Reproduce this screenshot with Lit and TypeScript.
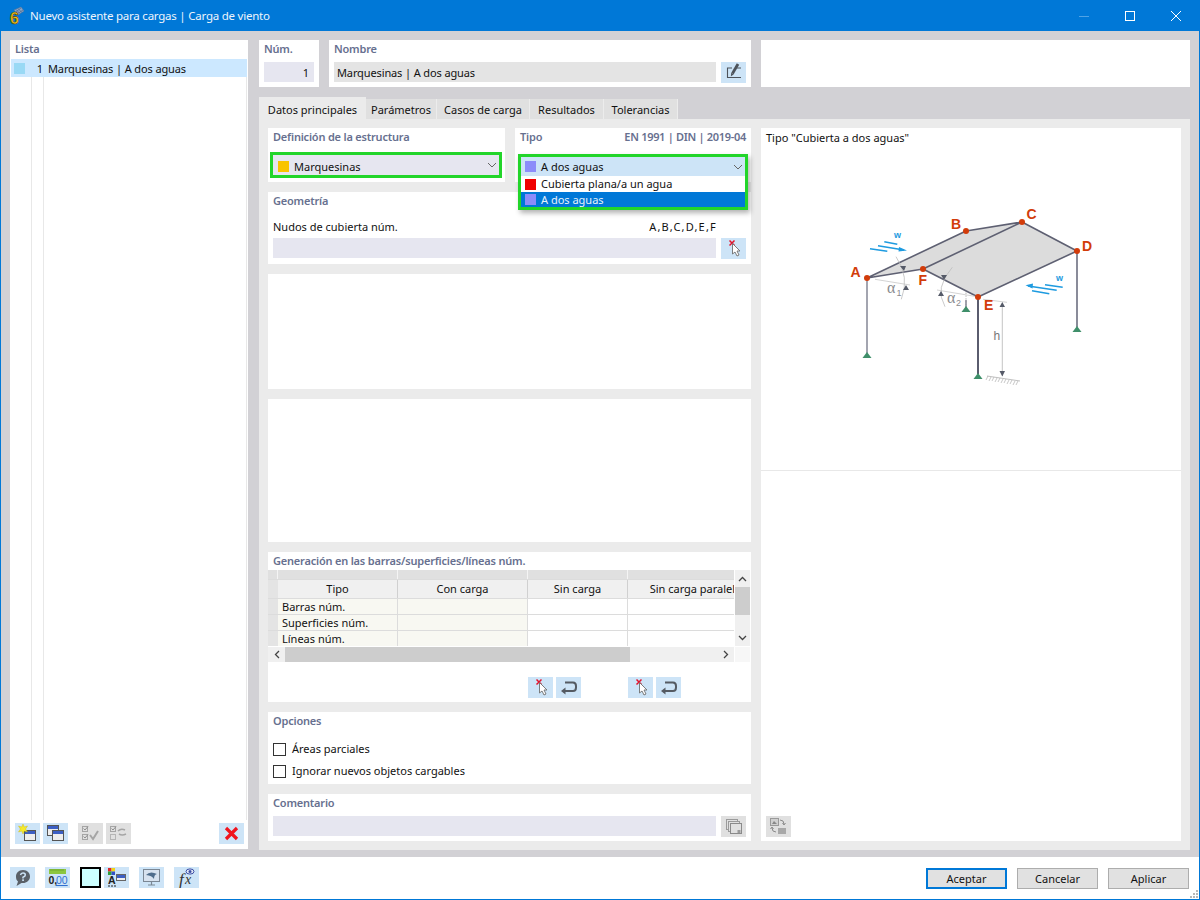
import { LitElement, html, css, svg } from "lit";
import { customElement } from "lit/decorators.js";

const ic = (body: unknown, w = 25, h = 21) =>
  html`<svg width=${w} height=${h} viewBox="0 0 25 21" xmlns="http://www.w3.org/2000/svg">${body}</svg>`;

const cursorX = svg`
  <path d="M8.5 2.5 L13.5 7.5 M13.5 2.5 L8.5 7.5" stroke="#e2142d" stroke-width="1.5" fill="none"/>
  <path d="M11.5 5.5 L11.5 16 L14 14 L16 18 L18 17 L16 13 L19 13 Z" fill="#fff" stroke="#6e6e6e" stroke-width="0.9"/>`;
const ret = svg`
  <path d="M9 5.5 H17 Q20 5.5 20 9 V10.5 Q20 14 17 14 H9" stroke="#555b63" stroke-width="2" fill="none"/>
  <path d="M9.5 10.5 L5 14 L9.5 17.5 Z" fill="#555b63"/>`;
const edit = svg`
  <path d="M11 6 H6.5 V15.5 H20 M16 6 H20" stroke="#4d535b" stroke-width="1.1" fill="none"/>
  <path d="M17 2 L11.5 11.5" stroke="#4d535b" stroke-width="2.8" fill="none"/>
  <path d="M10.2 10.8 L12.8 12.2 L9.8 14.5 Z" fill="#4d535b"/>`;
const win = (x: number, y: number, w: number, h: number, bar = "#3c5fc4", stroke = "#555", fill = "#eee") => svg`
  <rect x=${x + 0.5} y=${y + 0.5} width=${w} height=${h} fill=${fill} stroke=${stroke}/>
  <rect x=${x + 1} y=${y + 1} width=${w - 1} height="3" fill=${bar}/>`;
const newWin = svg`
  ${win(9, 7, 11, 10)}
  <path d="M8 1 L9.3 4 L12.5 3 L10.6 6 L12.5 9 L9.3 8 L8 11 L6.7 8 L3.5 9 L5.4 6 L3.5 3 L6.7 4 Z" fill="#f5e92d" stroke="#c9b400" stroke-width="0.4"/>`;
const copyWin = svg`${win(4, 2, 11, 10)}${win(9, 7, 11, 10)}`;
const checks = svg`
  <rect x="4.5" y="3.5" width="5" height="5" fill="none" stroke="#a5a5a5"/>
  <rect x="4.5" y="11.5" width="5" height="5" fill="none" stroke="#a5a5a5"/>
  <path d="M5.5 5.5 L7 7 L10 3.5 M5.5 13.5 L7 15 L10 11.5" stroke="#8e8e8e" fill="none"/>
  <path d="M12 12 L15 16 L20 8" stroke="#a5a5a5" stroke-width="2" fill="none"/>`;
const checksSwap = svg`
  <rect x="4.5" y="3.5" width="5" height="5" fill="none" stroke="#a5a5a5"/>
  <rect x="4.5" y="11.5" width="5" height="5" fill="none" stroke="#b5b5b5"/>
  <path d="M5.5 5.5 L7 7 L10 3.5" stroke="#8e8e8e" fill="none"/>
  <path d="M12 8 Q15 5 19 7 M20 11 Q16 13 13 11" stroke="#a5a5a5" stroke-width="1.6" fill="none"/>`;
const redX = svg`<path d="M7 5 L18 16 M18 5 L7 16" stroke="#f0141e" stroke-width="3.2" fill="none"/>`;
const help = svg`
  <path d="M13 3 C17.5 3 20 6 20 9.5 C20 13.5 16.5 16 13 16 L11.5 16 L6.5 19 L8 14.5 C6.5 13.5 6 11.5 6 9.5 C6 6 8.5 3 13 3 Z" fill="#5a6068"/>
  <path d="M10.5 8 Q11 6 13 6 Q15.3 6 15.3 8 Q15.3 9.5 13 10.2 V11.5" stroke="#cde4f7" stroke-width="1.5" fill="none"/>
  <rect x="12.2" y="12.3" width="1.7" height="1.7" fill="#cde4f7"/>`;
const ruler = svg`
  <rect x="4" y="2" width="17" height="5" fill="#8cc63f"/>
  <path d="M6 2v2M8 2v2M10 2v2M12 2v2M14 2v2M16 2v2M18 2v2" stroke="#5d9322" stroke-width="0.6"/>
  <text x="3.5" y="17" font-size="10.5" font-weight="700" font-family="Liberation Sans, sans-serif" fill="#222">0,</text>
  <text x="11" y="17" font-size="10.5" font-family="Liberation Sans, sans-serif" fill="#2f6fd0" text-decoration="underline">00</text>`;
const colorFont = svg`
  <rect x="4" y="1" width="3.5" height="3.5" fill="#e0262a"/><rect x="7.5" y="1" width="3.5" height="3.5" fill="#f2d416"/>
  <rect x="4" y="4.5" width="3.5" height="3.5" fill="#2f9e3a"/><rect x="7.5" y="4.5" width="3.5" height="3.5" fill="#3352c8"/>
  <text x="4" y="17" font-size="10.5" font-weight="700" font-family="Liberation Sans, sans-serif" fill="#222">A</text>
  <path d="M4 19h2M7 19h2M10 19h2" stroke="#222"/>
  ${win(12, 7, 9, 6, "#3c5fc4", "#666", "#eee")}`;
const monitor = svg`
  <rect x="4.5" y="2.5" width="16" height="12" fill="#d7e2ef" stroke="#7b8794"/>
  <path d="M7 8 Q11 3.5 18 7 Q15 7.5 15 12 Q13 8.5 7 8 Z" fill="#4f6d8c"/>
  <path d="M12.5 15v2.5M9 18h7" stroke="#7b8794" stroke-width="1.2"/>`;
const fx = svg`
  <text x="5" y="18" font-size="17" font-style="italic" font-family="Liberation Serif, serif" fill="#333">f</text>
  <text x="11" y="17" font-size="14" font-style="italic" font-family="Liberation Serif, serif" fill="#333">x</text>
  <ellipse cx="16" cy="4.5" rx="4" ry="2.6" fill="#dfe6f6" stroke="#3d4fa5"/>
  <circle cx="16" cy="4.5" r="1.5" fill="#3d4fa5"/>`;
const copyGray = svg`
  <rect x="5.5" y="3.5" width="11" height="10" fill="none" stroke="#9a9a9a"/>
  <rect x="7.5" y="5.5" width="11" height="10" fill="#e0e0e0" stroke="#9a9a9a"/>
  <rect x="9.5" y="7.5" width="11" height="10" fill="#e0e0e0" stroke="#8a8a8a"/>
  <rect x="16.5" y="14" width="3" height="3" fill="#9a9a9a"/>`;
const swapGray = svg`
  <rect x="4.5" y="2.5" width="8" height="7" fill="#d0d0d0" stroke="#9a9a9a"/>
  <path d="M6 8 L8 5 L11 8 Z" fill="#888"/>
  <rect x="12" y="12" width="8" height="6" fill="#a8a8a8"/>
  <path d="M14 4 Q18 4 18 8 M16.5 7 L18 9 L19.5 7 M10 16 Q6 16 6 12 M4.5 13 L6 11 L7.5 13" stroke="#8a8a8a" fill="none"/>`;

const roofDiagram = svg`
<svg class="diagram" width="420" height="342" viewBox="761 128 420 342" xmlns="http://www.w3.org/2000/svg">
  <defs>
    <path id="sup" d="M-4.5 0 L0 -6 L4.5 0 Z" fill="#3f8f6a"/>
  </defs>
  <path d="M966 231 V307" stroke="#b5b5b5" stroke-width="1" stroke-dasharray="1.4 1.4"/>
  <path d="M966 300 V308" stroke="#8c8e9a" stroke-width="1.6"/>
  <path d="M867 278 L966 231 L1022 222 L1077 251 L978 297 L923 269 Z" fill="#dcdcdc"/>
  <path d="M867 278 V353" stroke="#a3a5b0" stroke-width="2"/>
  <path d="M978 297 V374" stroke="#5a5c6e" stroke-width="2"/>
  <path d="M1077 251 V327" stroke="#7d7f8e" stroke-width="1.8"/>
  <path d="M867 278 L966 231 L1022 222 L923 269 Z M923 269 L978 297 L1077 251 L1022 222" fill="none" stroke="#5e6072" stroke-width="1.6" stroke-linejoin="round"/>
  <use href="#sup" x="867" y="358"/><use href="#sup" x="978" y="379"/><use href="#sup" x="1077" y="332"/><use href="#sup" x="966" y="312"/>
  <path d="M987 376 L1020 381" stroke="#b0b0b0" stroke-width="0.8"/>
  <path d="M988 376l-2 4M991 377l-2 4M994 377l-2 4M997 378l-2 4M1000 378l-2 4M1003 379l-2 4M1006 379l-2 4M1009 380l-2 4M1012 380l-2 4M1015 381l-2 4M1018 381l-2 4" stroke="#b0b0b0" stroke-width="0.7"/>
  <path d="M875 279.3 L910 285 M937 290 L977 296.7 M983 299.3 L1007 302.3" stroke="#c8c8c8" stroke-width="0.8"/>
  <path d="M896 256.7 Q910 277 901.3 299.3 M952.3 267.3 Q934 288 945 306.7" stroke="#bdbdbd" stroke-width="0.8" fill="none"/>
  <path d="M1002.3 303 V376" stroke="#bdbdbd" stroke-width="0.9"/>
  <path d="M999.5 307 L1002.3 302 L1005 307 Z M999.5 371 L1002.3 376.5 L1005 371 Z" fill="#555a68"/>
  <path d="M903 290 L906 285 L909 290 Z M938 296 L941 291 L944 296 Z M900 266 L906 266 L904 271 Z M941 275 L947 275 L944 280 Z" fill="#555a68"/>
  <g stroke="#1e9be0" fill="none" stroke-width="1.5">
    <path d="M884.3 241.7 L897.3 244.3 M878 245.7 L904 250 M870 248.7 L887.3 251.3"/>
    <path d="M1045 284.7 L1062.7 287.3 M1028 286 L1056.7 290.3 M1032 290.7 L1049.3 293.7"/>
  </g>
  <path d="M899 247 L907 250.6 L898.5 251.5 Z M1033 283.5 L1025.5 285.3 L1032.5 288.5 Z" fill="#1e9be0"/>
  <g font-family="Liberation Sans, sans-serif" font-size="9" font-weight="700" fill="#1e9be0">
    <text x="894" y="238">w</text><text x="1056" y="281">w</text>
  </g>
  <g font-family="Liberation Sans, sans-serif" font-size="14" font-weight="700" fill="#d23c0a">
    <text x="850.5" y="277">A</text><text x="951" y="229">B</text><text x="1026.5" y="219">C</text>
    <text x="1082" y="251">D</text><text x="984" y="310">E</text><text x="918.5" y="285">F</text>
  </g>
  <g font-family="Liberation Serif, serif" font-size="16" fill="#8a8a8e">
    <text x="887" y="293">α</text><text x="947" y="303">α</text>
  </g>
  <g font-family="Liberation Sans, sans-serif" font-size="9" fill="#8a8a8e">
    <text x="896.5" y="296">1</text><text x="956" y="306">2</text>
  </g>
  <text x="993.5" y="340" font-family="Liberation Sans, sans-serif" font-size="12" fill="#777">h</text>
  <g fill="#d23c0a">
    <circle cx="867" cy="278" r="3"/><circle cx="966" cy="231" r="3"/><circle cx="1022" cy="222" r="3"/>
    <circle cx="1077" cy="251" r="3"/><circle cx="978" cy="297" r="3"/><circle cx="923" cy="269" r="3"/>
  </g>
</svg>`;

@customElement("app-root")
export class AppRoot extends LitElement {
  static styles = css`
    :host { display: block; width: 1200px; height: 900px; font-family: "Noto Sans", sans-serif; font-size: 11px; color: #111; }
    * { box-sizing: border-box; }
    svg { display: block; }
    .win { width: 1200px; height: 900px; display: flex; flex-direction: column; border: 1px solid #0078d7; border-top: 0; background: #fff; }
    .title { height: 31px; flex: none; background: #0078d7; color: #eef5fc; display: flex; align-items: center; padding-left: 7px; gap: 5px; font-size: 11.5px; letter-spacing: -0.23px; margin: 0 -1px; }
    .controls { margin-left: auto; margin-right: 1px; display: flex; align-items: center; }
    .ctl { width: 46px; height: 31px; display: flex; align-items: center; justify-content: center; }
    .body { flex: 1; min-height: 0; background: #d2d1d5; padding: 9px 9px 7px; display: grid; grid-template-columns: 238px 1fr; column-gap: 11px; }
    .card { background: #fff; }
    .hd { font-weight: 600; color: #67708f; line-height: 16px; letter-spacing: -0.2px; }
    .pipe { letter-spacing: -0.12px; }
    .list { display: flex; flex-direction: column; position: relative; height: 809px; }
    .list .hd { padding-left: 5px; height: 19px; flex: none; line-height: 17px; }
    .lrow { height: 18px; flex: none; margin: 0 1px; background: #cce8ff; display: flex; align-items: center; }
    .swatch { width: 11px; height: 11px; flex: none; }
    .lrow .swatch { background: #99d9f5; margin-left: 3px; }
    .lnum { width: 18px; text-align: right; }
    .ltxt { margin-left: 5px; }
    .ltree { flex: 1; margin: 0 0 0 1px; display: flex; }
    .ltree i { display: block; width: 12px; border-right: 1px solid #e8e8e8; height: 100%; }
    .ltree i:first-child { width: 21px; }
    .ltree b { display: block; margin-left: auto; width: 1px; margin-right: 1px; background: #e8e8e8; }
    .lbar { height: 29px; flex: none; display: flex; gap: 3px; padding: 3px 0 5px 5px; align-items: flex-start; }
    .btn { width: 25px; height: 21px; background: #cde4f7; flex: none; }
    .btn.off { background: #e0e0e0; }
    .sp { margin-left: 7px; }
    .del { margin-left: auto; margin-right: 4px; }
    .main { display: flex; flex-direction: column; min-width: 0; }
    .top { display: grid; grid-template-columns: 60px 422px 429px; column-gap: 10px; height: 47px; flex: none; }
    .top .card { padding: 1px 5px 0; }
    .numv { margin-top: 5px; height: 20px; background: #e6e6f0; text-align: right; padding-right: 5px; line-height: 22px; }
    .namerow { display: flex; gap: 5px; margin-top: 5px; }
    .namev { flex: 1; height: 20px; background: #e4e4e4; padding-left: 3px; line-height: 22px; }
    .tabs { display: flex; margin-top: 10px; height: 22px; flex: none; align-items: flex-end; }
    .tab { height: 20px; background: #e0e0e0; border-right: 1px solid #ececec; line-height: 22px; text-align: center; }
    .tab.on { height: 22px; background: #ebebeb; line-height: 25px; border: 0; }
    .panel { flex: 1; min-height: 0; background: #ebebeb; padding: 9px 9px 8px; display: grid; grid-template-columns: 483px 420px; column-gap: 10px; }
    .col { display: flex; flex-direction: column; gap: 10px; min-height: 0; }
    .split { display: grid; grid-template-columns: 237px 236px; column-gap: 10px; height: 54px; flex: none; }
    .split .card { padding: 1px 5px 0; position: relative; }
    .hdrow { display: flex; justify-content: space-between; }
    .std { letter-spacing: -0.3px; }
    .combo { position: absolute; display: flex; align-items: center; }
    .c1 { left: 2px; top: 24px; width: 232px; height: 26px; border: 3px solid #22d52a; background: #e6e6f0; padding: 3px 0 0 5px; gap: 5px; }
    .c1 .chev { transform: translateY(-2px); }
    .chev { margin-left: auto; margin-right: 2px; }
    .dd { position: absolute; left: 3px; top: 26px; width: 230px; height: 56px; border: 3px solid #22d52a; background: #fff; z-index: 3; box-shadow: 2px 3px 5px rgba(0,0,0,.3); display: flex; flex-direction: column; }
    .dd > div { display: flex; align-items: center; gap: 5px; padding-left: 4px; }
    .dd .s { height: 19px; background: #cde4f7; padding-left: 4px; }
    .dd .o1 { height: 16px; }
    .dd .o1 span { margin-top: -2px; }
    .dd .o2 { height: 15px; background: #0078d7; color: #e8f2fb; }
    .geo { height: 72px; flex: none; padding: 1px 5px 0; }
    .geo .lab { margin-top: 10px; height: 16px; line-height: 16px; display: flex; justify-content: space-between; padding-right: 29px; }
    .nodes { letter-spacing: 1.2px; }
    .inrow { display: flex; gap: 5px; margin-top: 3px; }
    .in { flex: 1; height: 20px; background: #e6e6f0; }
    .blank1 { height: 115px; flex: none; }
    .blank2 { height: 143px; flex: none; }
    .gen { height: 150px; flex: none; padding-top: 1px; }
    .gen .hd { padding-left: 5px; height: 17px; }
    .tbl { display: grid; grid-template-columns: 466px 1px 15px; height: 92px; }
    .grid { display: grid; grid-template-columns: 10px 120px 130px 100px 136px; grid-template-rows: 9px 1px 18px 1px 15px 1px 15px 1px 15px; overflow: hidden; height: 76px; width: 466px; background: #fff; }
    .g { border-right: 1px solid #dcdcdc; white-space: nowrap; overflow: hidden; }
    .gh { background: #e0e0e0; border-right-color: #f4f4f4; }
    .gt { background: #f0f0f0; text-align: center; line-height: 18px; color: #111; border-right-color: #d0d0d0; }
    .gr { background: #e4e4e4; border-right: 0; }
    .ga { background: #f8f8f2; padding-left: 4px; line-height: 15px; }
    .gb { background: #f8f8f2; }
    .gw { background: #fff; }
    .line { grid-column: 1 / -1; background: #dcdcdc; }
    .vs { grid-column: 3; grid-row: 1; height: 76px; background: #f0f0f0; display: flex; flex-direction: column; }
    .ar { height: 17px; display: flex; align-items: center; justify-content: center; flex: none; }
    .thumbv { height: 28px; background: #cdcdcd; flex: none; }
    .hs { grid-column: 1; grid-row: 2; margin-top: 1px; height: 15px; background: #f0f0f0; display: flex; align-items: center; }
    .corner { grid-column: 3; grid-row: 2; margin-top: 1px; height: 15px; background: #f7f7f7; }
    .thumbh { width: 345px; height: 15px; background: #cdcdcd; }
    .hs .ar { width: 17px; height: 15px; }
    .hs .ar.r { margin-left: auto; }
    .gbtns { display: flex; padding: 15px 0 0 260px; gap: 3px; }
    .opt { height: 72px; flex: none; padding: 1px 5px 0; }
    .ck { display: flex; align-items: flex-start; gap: 6px; height: 13px; line-height: 13px; }
    .ck span { margin-top: -1px; }
    .box { width: 13px; height: 13px; border: 1px solid #333; background: #fff; }
    .opt .ck:nth-of-type(2) { margin-top: 14px; }
    .opt .ck:nth-of-type(3) { margin-top: 9px; }
    .com { height: 47px; flex: none; padding: 1px 5px 0; }
    .com .inrow { margin-top: 5px; }
    .right { display: flex; flex-direction: column; height: 713px; }
    .rtop { height: 343px; flex: none; position: relative; border-bottom: 1px solid #e8e8e8; padding: 2px 5px; }
    .rtop .t { line-height: 16px; position: relative; z-index: 1; }
    .diagram { position: absolute; left: 0; top: 0; }
    .rbot { flex: 1; display: flex; align-items: flex-end; padding: 0 5px 4px; }
    .foot { height: 42px; flex: none; display: flex; align-items: flex-start; padding: 10px 9px 0; position: relative; }
    .foot .btn { margin-right: 10px; }
    .foot .colorbox { width: 21px; height: 21px; border: 2px solid #000; background: #ccffff; margin-right: 3px; flex: none; }
    .acts { margin-left: auto; display: flex; gap: 10px; padding: 1px 1px 0 0; }
    .act { width: 81px; height: 21px; background: #e1e1e1; border: 1px solid #adadad; text-align: center; line-height: 19px; }
    .act.pri { border: 2px solid #0078d7; line-height: 17px; }
    .grip { position: absolute; right: 0; bottom: 0; }
  `;

  render() {
    const chev = html`<svg class="chev" width="10" height="6" viewBox="0 0 10 6"><path d="M1 1 L5 5 L9 1" stroke="#666" fill="none"/></svg>`;
    const tabs: [string, number][] = [["Parámetros", 71], ["Casos de carga", 93], ["Resultados", 74], ["Tolerancias", 74]];
    return html`
      <div class="win">
        <div class="title">
          <svg width="18" height="20" viewBox="0 0 18 20">
            <path d="M7 4 L14 1 L17 5 L11 9 Z" fill="#8aa5c8" stroke="#5e7590" stroke-width="0.5"/>
            <path d="M9 3.5l4 4M11 2.5l4 4M8 6.5l6-4.5M10 8l6-4" stroke="#3f5674" stroke-width="0.5"/>
            <text x="3" y="18" font-family="Liberation Sans, sans-serif" font-weight="700" font-size="16" fill="#f7c41a" stroke="#5c4a08" stroke-width="0.7">6</text>
          </svg>
          <span>Nuevo asistente para cargas | Carga de viento</span>
          <div class="controls">
            <div class="ctl"><svg width="10" height="10" viewBox="0 0 10 10"><path d="M0 5.5H10" stroke="#4fa3e6"/></svg></div>
            <div class="ctl"><svg width="10" height="10" viewBox="0 0 10 10"><rect x=".5" y=".5" width="9" height="9" fill="none" stroke="#fff"/></svg></div>
            <div class="ctl"><svg width="10" height="10" viewBox="0 0 10 10"><path d="M0 0L10 10M10 0L0 10" stroke="#fff"/></svg></div>
          </div>
        </div>

        <div class="body">
          <div class="card list">
            <div class="hd">Lista</div>
            <div class="lrow"><div class="swatch"></div><div class="lnum">1</div><div class="ltxt pipe">Marquesinas | A dos aguas</div></div>
            <div class="ltree"><i></i><i></i><b></b></div>
            <div class="lbar">
              <div class="btn">${ic(newWin)}</div>
              <div class="btn">${ic(copyWin)}</div>
              <div class="btn off sp">${ic(checks)}</div>
              <div class="btn off">${ic(checksSwap)}</div>
              <div class="btn del">${ic(redX)}</div>
            </div>
          </div>

          <div class="main">
            <div class="top">
              <div class="card"><div class="hd">Núm.</div><div class="numv">1</div></div>
              <div class="card"><div class="hd">Nombre</div>
                <div class="namerow"><div class="namev pipe">Marquesinas | A dos aguas</div><div class="btn">${ic(edit)}</div></div>
              </div>
              <div class="card"></div>
            </div>
            <div class="tabs">
              <div class="tab on" style="width:107px">Datos principales</div>
              ${tabs.map(([t, w]) => html`<div class="tab" style="width:${w}px">${t}</div>`)}
            </div>
            <div class="panel">
              <div class="col">
                <div class="split">
                  <div class="card">
                    <div class="hd">Definición de la estructura</div>
                    <div class="combo c1"><div class="swatch" style="background:#f9c400"></div><span>Marquesinas</span>${chev}</div>
                  </div>
                  <div class="card">
                    <div class="hdrow hd"><span>Tipo</span><span class="std">EN 1991 | DIN | 2019-04</span></div>
                    <div class="dd">
                      <div class="s"><div class="swatch" style="background:#8c8cfa"></div><span>A dos aguas</span>${chev}</div>
                      <div class="o1"><div class="swatch" style="background:#f00000"></div><span>Cubierta plana/a un agua</span></div>
                      <div class="o2"><div class="swatch" style="background:#8c8cfa"></div><span>A dos aguas</span></div>
                    </div>
                  </div>
                </div>
                <div class="card geo">
                  <div class="hd">Geometría</div>
                  <div class="lab"><span>Nudos de cubierta núm.</span><span class="nodes">A,B,C,D,E,F</span></div>
                  <div class="inrow"><div class="in"></div><div class="btn">${ic(cursorX)}</div></div>
                </div>
                <div class="card blank1"></div>
                <div class="card blank2"></div>
                <div class="card gen">
                  <div class="hd">Generación en las barras/superficies/líneas núm.</div>
                  <div class="tbl">
                    <div class="grid">
                      <div class="g gh"></div><div class="g gh"></div><div class="g gh"></div><div class="g gh"></div><div class="g gh"></div>
                      <div class="line"></div>
                      <div class="g gr"></div><div class="g gt">Tipo</div><div class="g gt">Con carga</div><div class="g gt">Sin carga</div><div class="g gt">Sin carga paralela</div>
                      <div class="line"></div>
                      <div class="g gr"></div><div class="g ga">Barras núm.</div><div class="g gb"></div><div class="g gw"></div><div class="g gw"></div>
                      <div class="line"></div>
                      <div class="g gr"></div><div class="g ga">Superficies núm.</div><div class="g gb"></div><div class="g gw"></div><div class="g gw"></div>
                      <div class="line"></div>
                      <div class="g gr"></div><div class="g ga">Líneas núm.</div><div class="g gb"></div><div class="g gw"></div><div class="g gw"></div>
                    </div>
                    <div></div>
                    <div class="vs">
                      <div class="ar"><svg width="9" height="6" viewBox="0 0 9 6"><path d="M1 5L4.5 1.5L8 5" stroke="#444" stroke-width="1.3" fill="none"/></svg></div>
                      <div class="thumbv"></div>
                      <div style="flex:1"></div>
                      <div class="ar"><svg width="9" height="6" viewBox="0 0 9 6"><path d="M1 1L4.5 4.5L8 1" stroke="#444" stroke-width="1.3" fill="none"/></svg></div>
                    </div>
                    <div class="hs">
                      <div class="ar"><svg width="6" height="9" viewBox="0 0 6 9"><path d="M5 1L1.5 4.5L5 8" stroke="#444" stroke-width="1.3" fill="none"/></svg></div>
                      <div class="thumbh"></div>
                      <div class="ar r"><svg width="6" height="9" viewBox="0 0 6 9"><path d="M1 1L4.5 4.5L1 8" stroke="#444" stroke-width="1.3" fill="none"/></svg></div>
                    </div>
                    <div class="corner"></div>
                  </div>
                  <div class="gbtns">
                    <div class="btn">${ic(cursorX)}</div><div class="btn">${ic(ret)}</div>
                    <div class="btn" style="margin-left:44px">${ic(cursorX)}</div><div class="btn">${ic(ret)}</div>
                  </div>
                </div>
                <div class="card opt">
                  <div class="hd">Opciones</div>
                  <div class="ck"><div class="box"></div><span>Áreas parciales</span></div>
                  <div class="ck"><div class="box"></div><span>Ignorar nuevos objetos cargables</span></div>
                </div>
                <div class="card com">
                  <div class="hd">Comentario</div>
                  <div class="inrow"><div class="in"></div><div class="btn off">${ic(copyGray)}</div></div>
                </div>
              </div>
              <div class="card right">
                <div class="rtop"><div class="t">Tipo "Cubierta a dos aguas"</div>${roofDiagram}</div>
                <div class="rbot"><div class="btn off">${ic(swapGray)}</div></div>
              </div>
            </div>
          </div>
        </div>

        <div class="foot">
          <div class="btn">${ic(help)}</div>
          <div class="btn">${ic(ruler)}</div>
          <div class="colorbox"></div>
          <div class="btn">${ic(colorFont)}</div>
          <div class="btn">${ic(monitor)}</div>
          <div class="btn">${ic(fx)}</div>
          <div class="acts">
            <div class="act pri">Aceptar</div><div class="act">Cancelar</div><div class="act">Aplicar</div>
          </div>
          <svg class="grip" width="10" height="10" viewBox="0 0 10 10"><path d="M7 1h2v2h-2zM4 4h2v2h-2zM7 4h2v2h-2zM1 7h2v2h-2zM4 7h2v2h-2zM7 7h2v2h-2z" fill="#b8b8b8"/></svg>
        </div>
      </div>
    `;
  }
}
